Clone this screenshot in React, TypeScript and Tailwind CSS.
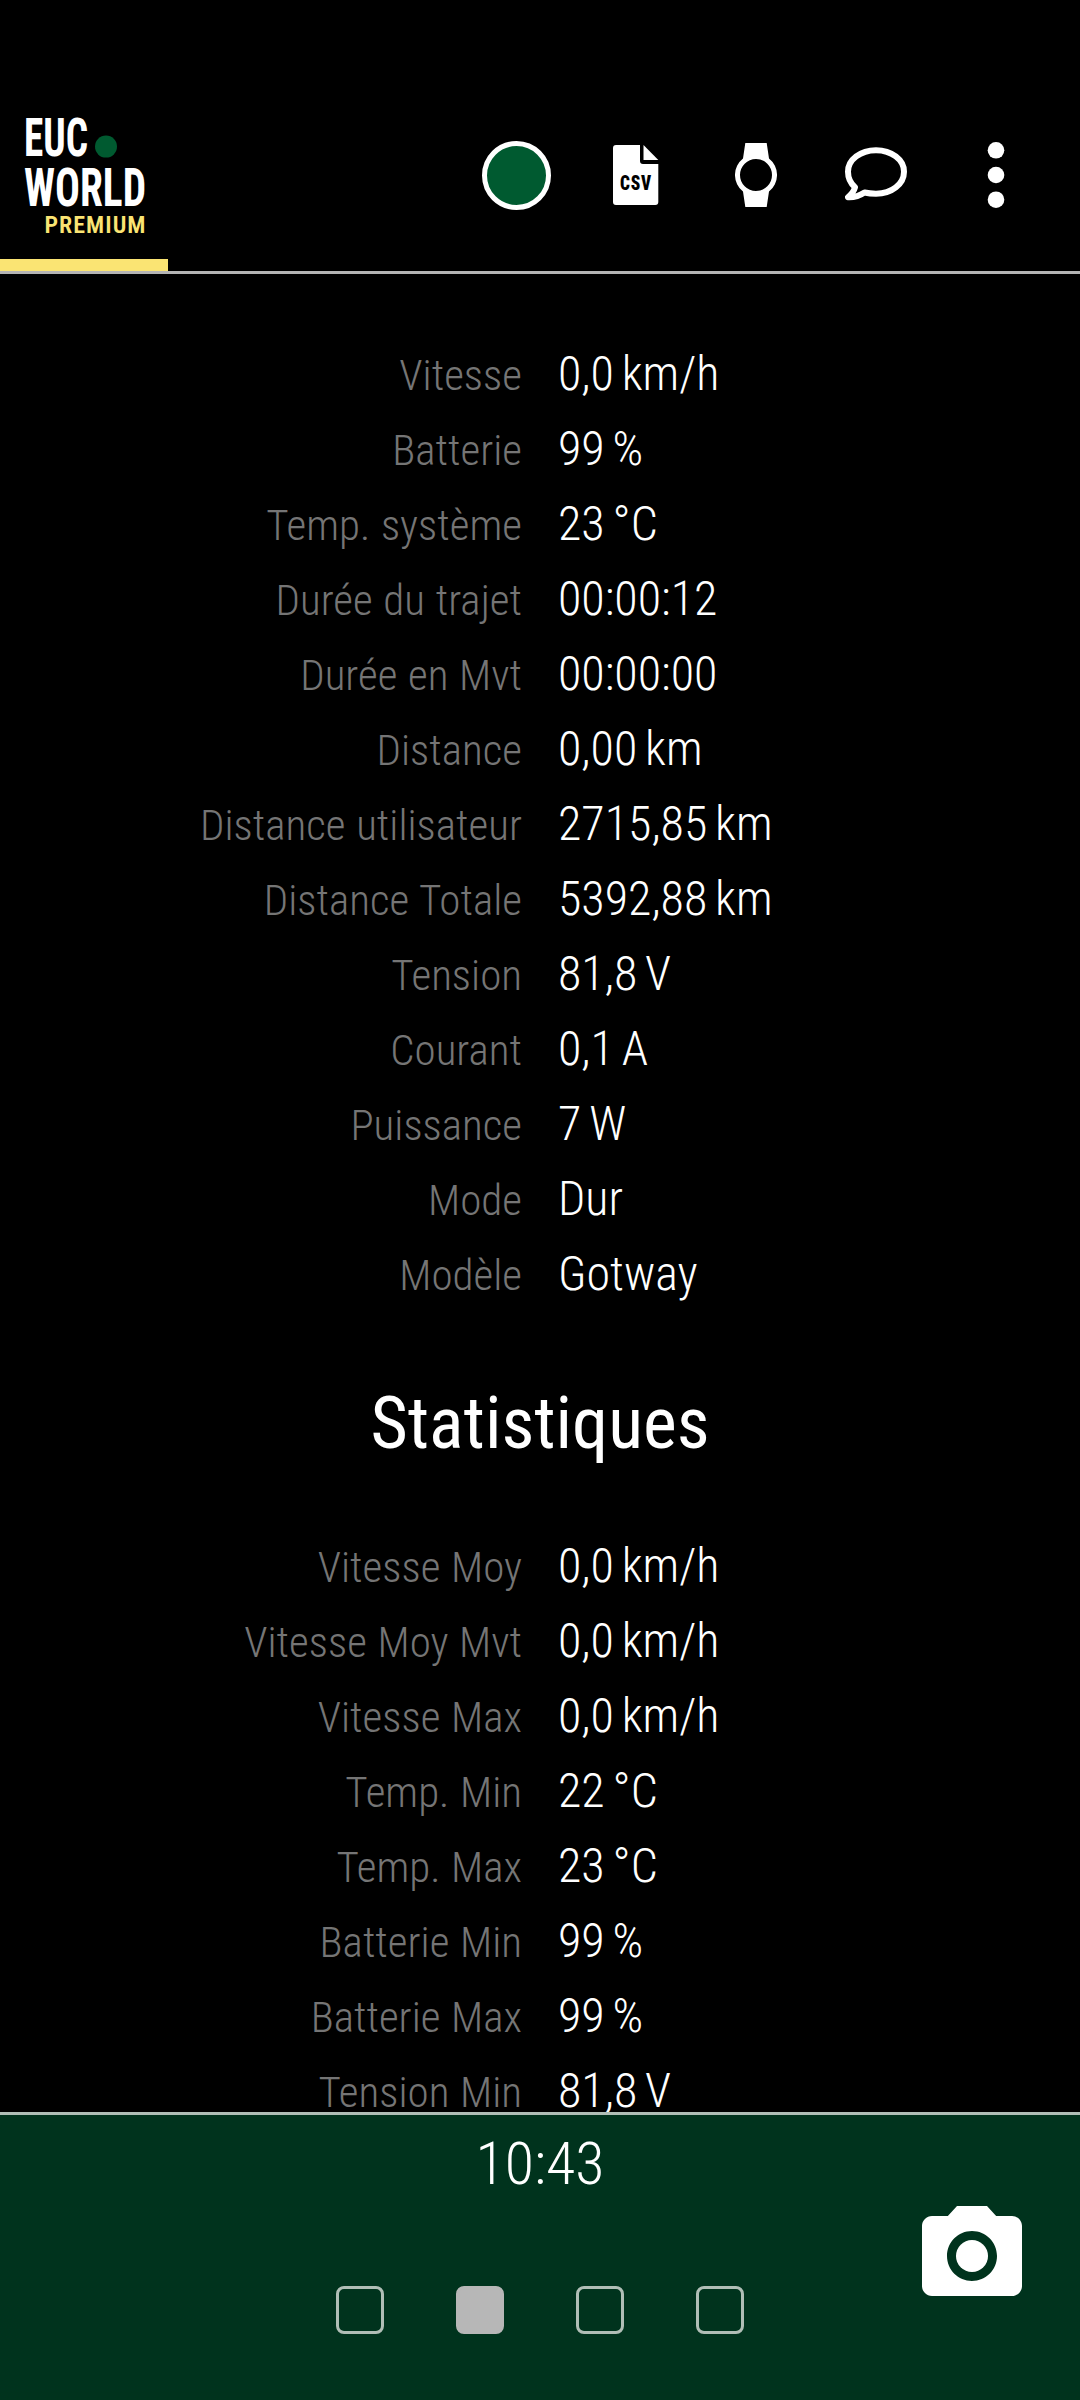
import React from "react";
import { MdPhotoCamera } from "react-icons/md";

const liveRows = [
  { label: "Vitesse", value: "0,0 km/h" },
  { label: "Batterie", value: "99 %" },
  { label: "Temp. système", value: "23 °C" },
  { label: "Durée du trajet", value: "00:00:12" },
  { label: "Durée en Mvt", value: "00:00:00" },
  { label: "Distance", value: "0,00 km" },
  { label: "Distance utilisateur", value: "2715,85 km" },
  { label: "Distance Totale", value: "5392,88 km" },
  { label: "Tension", value: "81,8 V" },
  { label: "Courant", value: "0,1 A" },
  { label: "Puissance", value: "7 W" },
  { label: "Mode", value: "Dur" },
  { label: "Modèle", value: "Gotway" },
];

const statRows = [
  { label: "Vitesse Moy", value: "0,0 km/h" },
  { label: "Vitesse Moy Mvt", value: "0,0 km/h" },
  { label: "Vitesse Max", value: "0,0 km/h" },
  { label: "Temp. Min", value: "22 °C" },
  { label: "Temp. Max", value: "23 °C" },
  { label: "Batterie Min", value: "99 %" },
  { label: "Batterie Max", value: "99 %" },
  { label: "Tension Min", value: "81,8 V" },
];

const pages = [false, true, false, false];

function Logo() {
  return (
    <svg width="168" height="150" viewBox="0 0 168 150" className="overflow-visible font-bold">
      <text x="24" y="45.7" fontSize="54" fill="#fff" textLength="64" lengthAdjust="spacingAndGlyphs">EUC</text>
      <circle cx="106" cy="36.6" r="11" fill="#005a30" />
      <text x="24" y="96.3" fontSize="54" fill="#fff" textLength="122" lengthAdjust="spacingAndGlyphs">WORLD</text>
      <text x="44.5" y="122.5" fontSize="23" fontWeight="600" letterSpacing="1" fill="#fae473" textLength="102" lengthAdjust="spacingAndGlyphs">PREMIUM</text>
    </svg>
  );
}

function CsvIcon() {
  return (
    <svg width="46" height="60" viewBox="0 0 46 60">
      <path d="M3 0H27V16Q27 19 30 19H45.300V57Q45.300 60 42.300 60H3Q0 60 0 57V3Q0 0 3 0Z" fill="#fff" />
      <path d="M30.500 0L45.300 15H30.500Z" fill="#fff" />
      <text x="7" y="44.800" fontSize="21" fontWeight="900" letterSpacing="1" fill="#000" textLength="32" lengthAdjust="spacingAndGlyphs">CSV</text>
    </svg>
  );
}

function WatchIcon() {
  return (
    <svg width="42" height="64" viewBox="0 0 42 64">
      <path
        fillRule="evenodd"
        fill="#fff"
        d="M10.300 0H31.700L34 15.500A21 21 0 0 1 34 48.500L31.700 64H10.300L8 48.500A21 21 0 0 1 8 15.500ZM21 16A16 16 0 1 0 21 48A16 16 0 1 0 21 16Z"
      />
    </svg>
  );
}

function CommentIcon() {
  return (
    <svg width="62" height="56" viewBox="0 0 62 56" fill="none">
      <path
        d="M31 4C15.500 4 3 13.500 3 25.500C3 32 5.500 37 10 41C9 45 6.500 48 3 51C9 51.300 15 49.300 19.500 46.300C23 47.100 27 47.500 31 47.500C46.500 47.500 59 38 59 25.500C59 13.500 46.500 4 31 4Z"
        stroke="#fff"
        strokeWidth="6"
        strokeLinejoin="round"
        transform="translate(0 -0.8)"
      />
    </svg>
  );
}

function MoreIcon() {
  return (
    <svg width="18" height="66" viewBox="0 0 18 66" fill="#fff">
      <circle cx="9" cy="8.300" r="8.300" />
      <circle cx="9" cy="33" r="8.300" />
      <circle cx="9" cy="57.700" r="8.300" />
    </svg>
  );
}

function Row({ label, value }: { label: string; value: string }) {
  return (
    <div className="grid h-[75px] grid-cols-2 items-baseline gap-x-9 whitespace-nowrap leading-[75px]">
      <span className="text-right text-[43px] text-[#757575] [word-spacing:1px]">{label}</span>
      <span className="text-[48px] text-white [word-spacing:-3px]">{value}</span>
    </div>
  );
}

export default function App() {
  return (
    <div className="flex h-[2400px] w-[1080px] flex-col overflow-hidden bg-black font-['Roboto_Condensed','Roboto',sans-serif] font-light text-white">
      {/* Top bar */}
      <header className="flex h-[274px] shrink-0 justify-between border-b-3 border-[#b4b4b4] pt-[110px]">
        <div className="flex flex-col">
          <Logo />
          <div className="mt-[-1px] h-3 w-[168px] shrink-0 bg-[#fae473]" />
        </div>
        <nav className="mr-6 flex h-[130px] items-center">
          <button className="flex w-[120px] justify-center">
            <span className="size-[69px] rounded-full border-[5px] border-white bg-[#005a30]" />
          </button>
          <button className="flex w-[120px] justify-center"><CsvIcon /></button>
          <button className="flex w-[120px] justify-center"><WatchIcon /></button>
          <button className="flex w-[120px] justify-center"><CommentIcon /></button>
          <button className="flex w-[120px] justify-center"><MoreIcon /></button>
        </nav>
      </header>

      {/* Values */}
      <main className="min-h-0 flex-1 overflow-hidden pt-[62px]">
        {liveRows.map((row) => (
          <Row key={row.label} {...row} />
        ))}
        <h2 className="mt-[65px] mb-14 h-[96px] text-center text-[72px] leading-[96px] font-normal">Statistiques</h2>
        {statRows.map((row) => (
          <Row key={row.label} {...row} />
        ))}
      </main>

      {/* Bottom bar */}
      <footer className="relative h-[288px] shrink-0 border-t-3 border-[#b0beb6] bg-[#00331d]">
        <p className="mt-[13px] text-center text-[60px] leading-[72px]">10:43</p>
        <div className="mt-[86px] flex justify-center gap-[72px]">
          {pages.map((active, i) => (
            <span
              key={i}
              className={`size-12 rounded-lg border-3 ${active ? "border-[#b7b7b7] bg-[#b7b7b7]" : "border-[#b0beb6]"}`}
            />
          ))}
        </div>
        <button className="absolute top-[81px] right-12">
          <MdPhotoCamera className="size-[120px]" />
        </button>
      </footer>
    </div>
  );
}
